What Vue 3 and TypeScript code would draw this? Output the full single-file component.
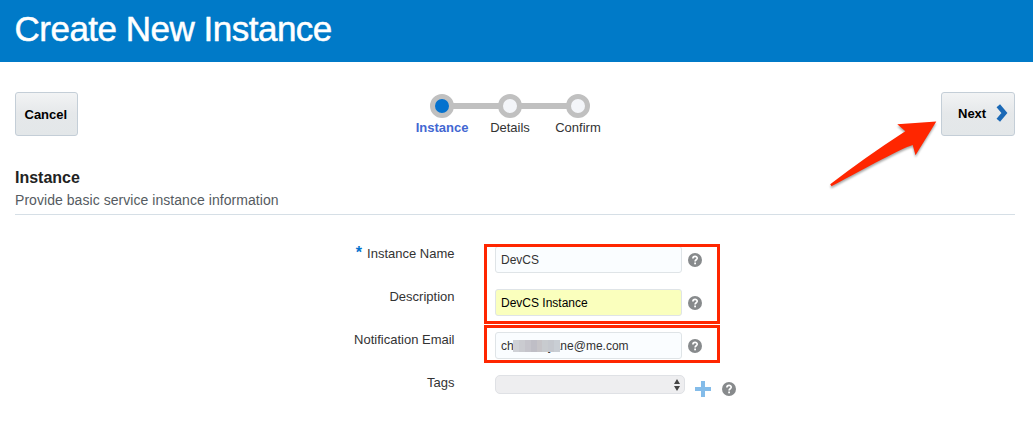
<script setup lang="ts">
interface Step { label: string; active: boolean }
interface Field { id: string; label: string; required: boolean; kind: 'text' | 'mail' | 'select'; value: string; filled: boolean }

const steps: Step[] = [
  { label: 'Instance', active: true },
  { label: 'Details', active: false },
  { label: 'Confirm', active: false },
]

const fields: Field[] = [
  { id: 'name', label: 'Instance Name', required: true, kind: 'text', value: 'DevCS', filled: false },
  { id: 'description', label: 'Description', required: false, kind: 'text', value: 'DevCS Instance', filled: true },
  { id: 'email', label: 'Notification Email', required: false, kind: 'mail', value: 'yane@me.com', filled: false },
  { id: 'tags', label: 'Tags', required: false, kind: 'select', value: '', filled: false },
]

const tiles: string[] = ['#cfd1d6', '#cacbd0', '#c5c4cb', '#bfbec6', '#c6c4c8', '#c8cbcf', '#c5c8ce', '#c9ced4']
</script>

<template>
  <div class="page">
    <header class="banner"><h1>Create New Instance</h1></header>

    <nav class="toolbar">
      <button class="btn cancel" type="button">Cancel</button>
      <ol class="train">
        <li v-for="step in steps" :key="step.label" :class="{ active: step.active }">
          <span class="stop"></span>
          <span class="stop-label">{{ step.label }}</span>
        </li>
      </ol>
      <button class="btn next" type="button">
        <span>Next</span>
        <svg width="12" height="18" viewBox="0 0 12 18"><path d="M2.3 1.8 L8.4 9 L2.3 16.2" fill="none" stroke="#1b69b6" stroke-width="4.6" /></svg>
      </button>
    </nav>

    <section class="intro">
      <h2>Instance</h2>
      <p>Provide basic service instance information</p>
    </section>

    <form class="form">
      <div v-for="field in fields" :key="field.id" class="row">
        <label><span v-if="field.required" class="star">*</span>{{ field.label }}</label>
        <div v-if="field.kind === 'select'" class="select">
          <svg width="6" height="12" viewBox="0 0 6 12"><path d="M0 5 L3 0 L6 5Z M0 7 L3 12 L6 7Z" fill="#444" /></svg>
        </div>
        <div v-else class="input" :class="{ filled: field.filled }">
          <template v-if="field.kind === 'mail'">
            <span>ch</span>
            <span class="masked">{{ field.value }}</span>
            <span class="mosaic"><i v-for="(tile, i) in tiles" :key="i" :style="{ background: tile }"></i></span>
          </template>
          <template v-else>{{ field.value }}</template>
        </div>
        <svg v-if="field.kind === 'select'" class="plus" width="16" height="16" viewBox="0 0 16 16"><path d="M6 0h4v6h6v4h-6v6H6v-6H0V6h6z" fill="#84bce9" /></svg>
        <svg class="help" width="14" height="14" viewBox="0 0 14 14">
          <circle cx="7" cy="7" r="7" fill="#878a8c" />
          <path d="M4.9 5.5 C4.9 2.6 9.3 2.8 9.2 5.3 C9.1 6.8 7.1 6.8 7.1 8.5" fill="none" stroke="#fff" stroke-width="1.7" />
          <rect x="6.2" y="9.5" width="1.8" height="1.8" fill="#fff" />
        </svg>
      </div>
    </form>

    <div class="mark mark-top"></div>
    <div class="mark mark-bottom"></div>
    <svg class="arrow" width="120" height="80" viewBox="0 0 120 80">
      <path d="M10.2 64.3 Q44 38 85.3 11.2 L77.3 4.2 L116.3 1.6 L95.5 35.3 L92.7 25 C80 29 50 46 11.5 66.3 Z" fill="#ff2600" />
    </svg>
  </div>
</template>

<style>
body { margin: 0; background: #fff; }
</style>

<style scoped>
.page { position: relative; width: 1033px; height: 421px; overflow: hidden; background: #fff; color: #333; font: 13px/16px "Liberation Sans", Arial, sans-serif; }
.banner { height: 62px; background: #007ac8; }
h1 { margin: 0; padding: 10px 0 0 14.5px; color: #fff; font-size: 35px; line-height: 38px; font-weight: 400; letter-spacing: -.5px; -webkit-text-stroke: .5px #fff; }
.toolbar { display: flex; justify-content: space-between; align-items: flex-start; height: 106px; padding: 30px 18px 0 15px; box-sizing: border-box; }
.btn { box-sizing: border-box; display: flex; align-items: center; height: 44px; margin: 0; border: 1px solid #c4ced7; border-radius: 3px; background: linear-gradient(#f2f3f4, #e5e8ea 50%, #e3e7e9); color: #000; font: bold 13px/16px "Liberation Sans", Arial, sans-serif; }
.cancel { width: 63px; padding: 2px 0 0 8.5px; }
.next { width: 74px; padding: 0 0 0 16px; }
.next svg { margin: 0 0 2px 9.5px; }
.train { display: flex; width: 204px; margin: 1px 0 0; padding: 0 0 0 1px; list-style: none; }
.train li { position: relative; display: flex; flex-direction: column; align-items: center; width: 68px; }
.train li + li::before { content: ""; position: absolute; left: -24px; top: 10px; width: 48px; height: 6px; background: #c0c0c0; }
.stop { box-sizing: border-box; width: 24px; height: 24px; margin-top: 1px; border: 5px solid #c0c0c0; border-radius: 50%; background: #f3f5f9; }
.active .stop { background: #0572ce; }
.stop-label { margin-top: 2px; }
.active .stop-label { color: #4267d2; font-weight: bold; }
.intro { height: 47px; box-sizing: border-box; margin: 0 18px 0 15px; border-bottom: 1px solid #d6dfe6; }
h2 { margin: 0; color: #222; font-size: 16px; line-height: 20px; }
p { margin: 3px 0 0; color: #555b61; font-size: 14px; line-height: 18px; letter-spacing: .05px; }
.form { padding-top: 31px; }
.row { display: flex; align-items: flex-start; height: 43px; }
label { width: 454.5px; margin-right: 40.5px; text-align: right; }
.star { margin-right: 5px; color: #0572ce; font-size: 16px; font-weight: bold; line-height: 10px; }
.input { position: relative; box-sizing: border-box; display: flex; align-items: center; width: 187px; height: 27px; padding-left: 5px; border: 1px solid #dfe4e7; border-radius: 3px; background: #fafdff; font-size: 12px; }
.filled { background: #faffbd; color: #000; }
.masked { margin-left: 34px; }
.mosaic { position: absolute; left: 17px; top: 7px; display: flex; width: 47px; height: 12px; }
.mosaic i { flex: 1; }
.select { box-sizing: border-box; display: flex; align-items: center; justify-content: flex-end; width: 190px; height: 19px; padding-right: 4px; border: 1px solid #dfe1e5; border-radius: 5px; background: #eeeef0; }
.help { margin: 7px 0 0 6px; }
.plus { margin: 6px 0 0 10px; }
.plus + .help { margin-left: 11px; }
.mark { position: absolute; box-sizing: border-box; left: 484px; width: 236px; border: 3px solid #ff2600; }
.mark-top { top: 244px; height: 80px; }
.mark-bottom { top: 325px; height: 38px; }
.arrow { position: absolute; left: 820px; top: 120px; filter: drop-shadow(0 2px 1px rgba(0, 0, 0, .35)); }
</style>
